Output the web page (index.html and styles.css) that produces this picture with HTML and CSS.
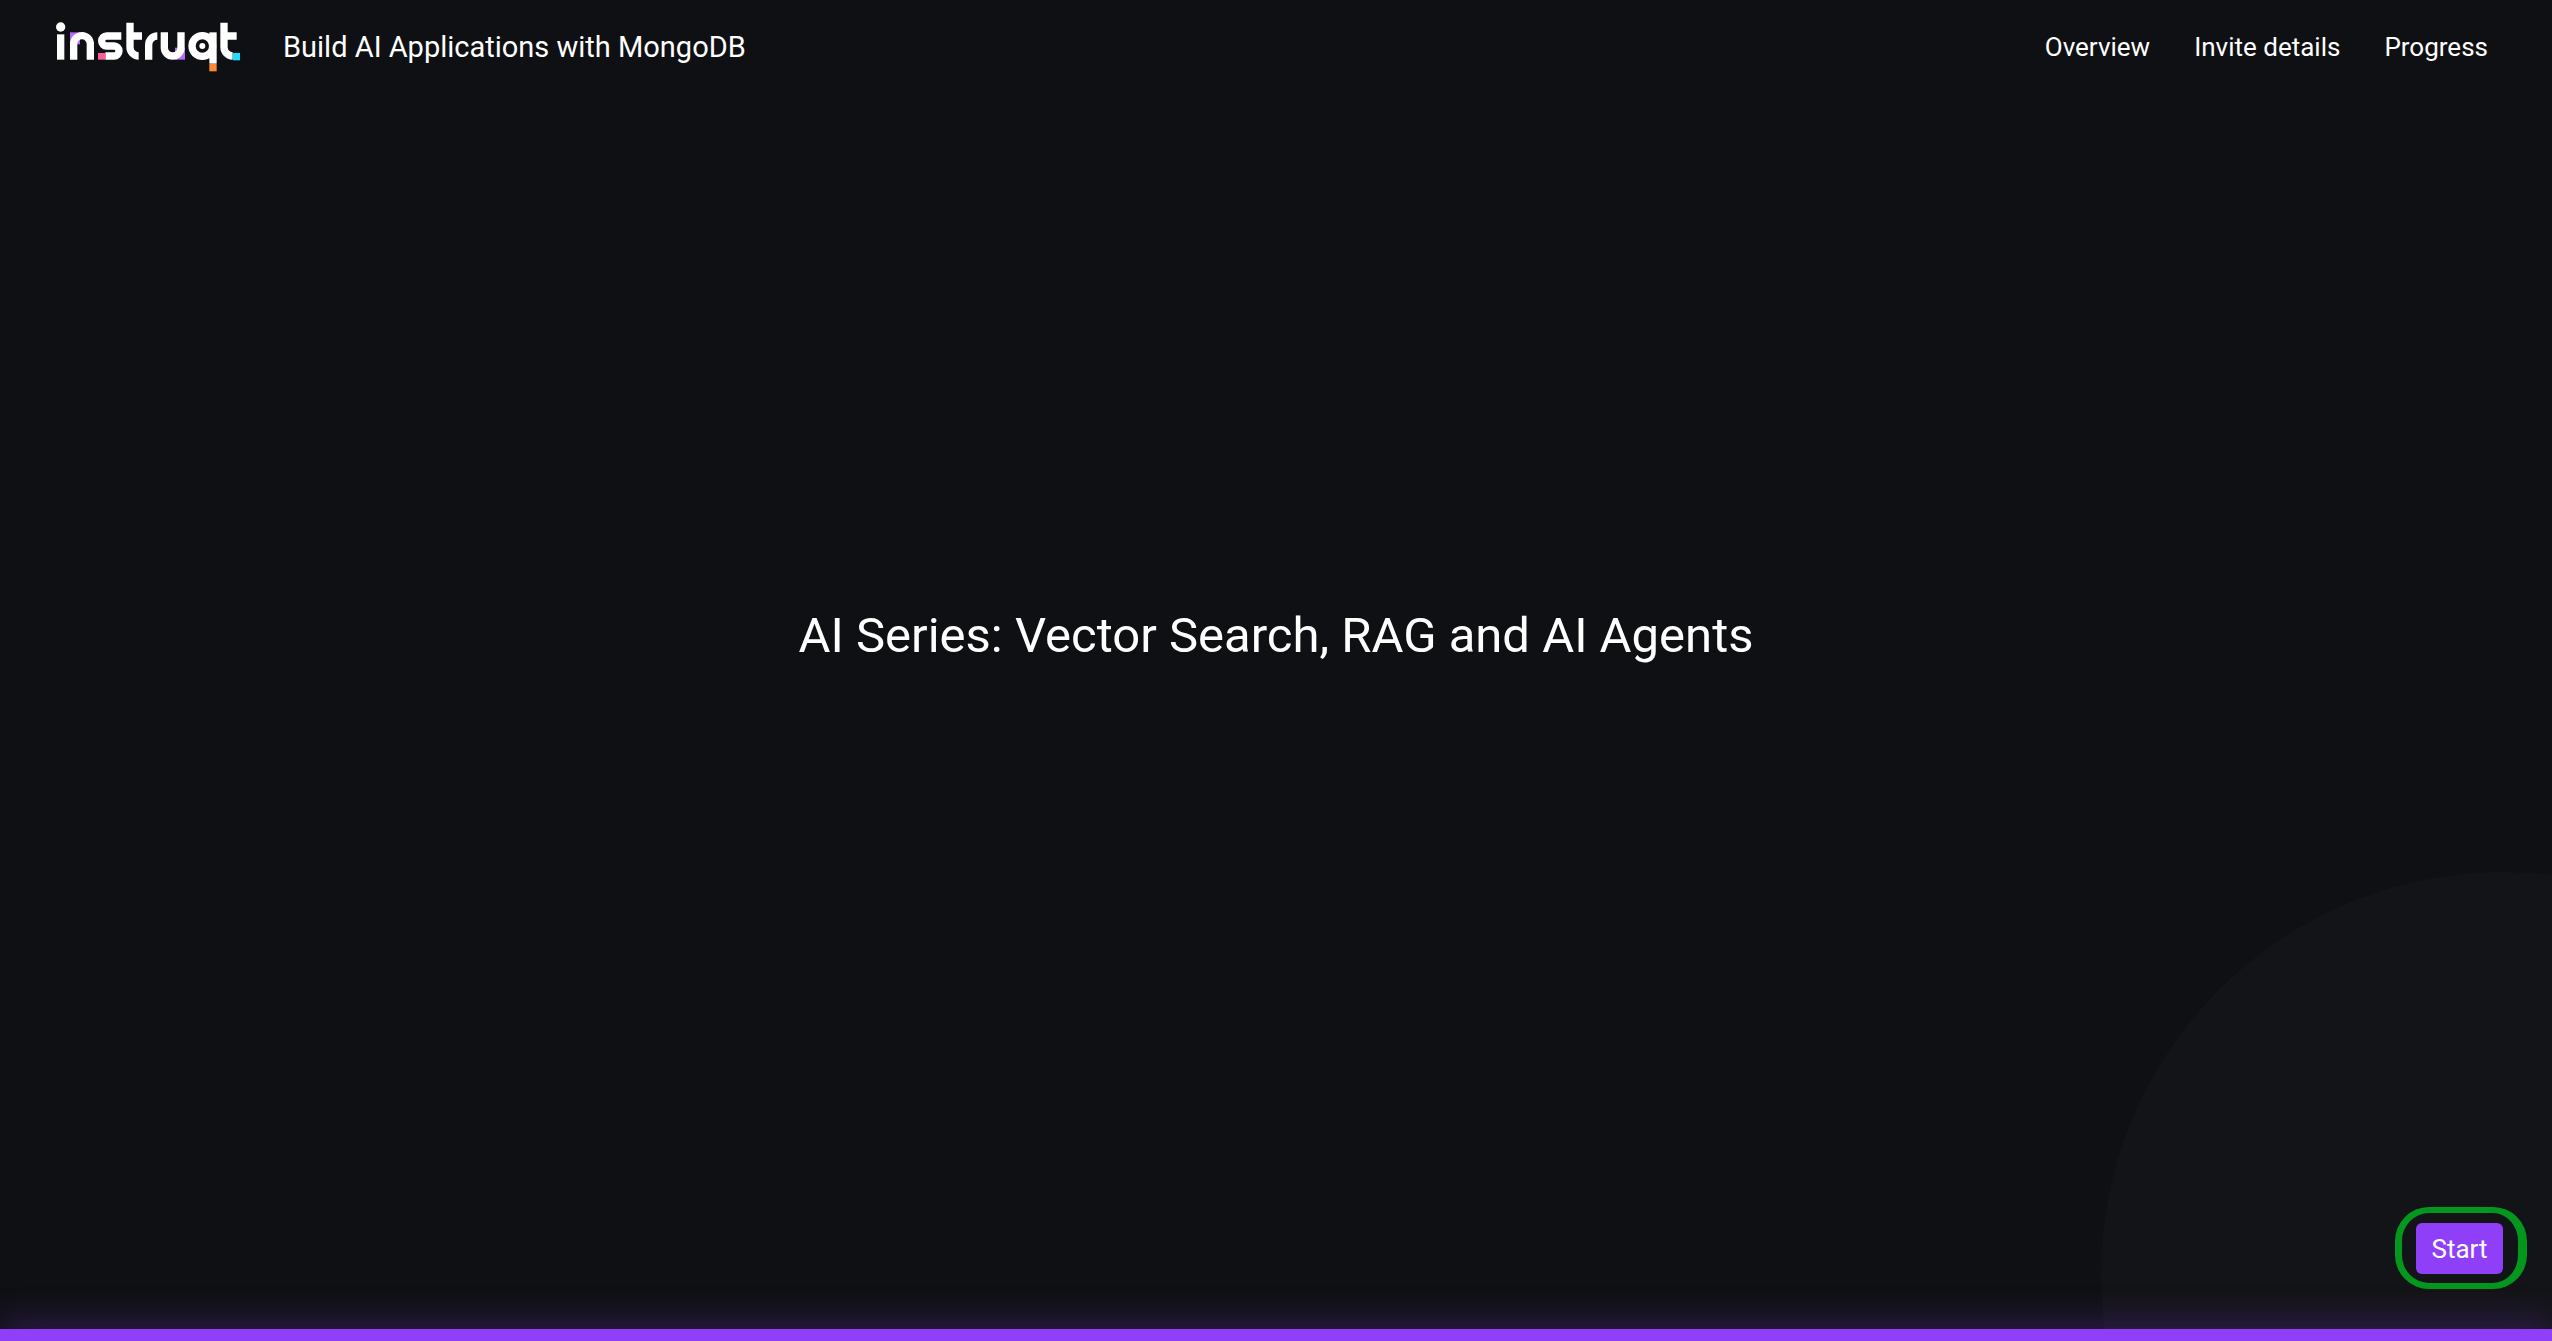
FILE: index.html
```html
<!DOCTYPE html>
<html lang="en">
<head>
  <meta charset="utf-8">
  <meta name="viewport" content="width=device-width, initial-scale=1">
  <title>Build AI Applications with MongoDB</title>
  <link rel="stylesheet" href="styles.css">
</head>
<body>
  <div class="page">
    <div class="backdrop-circle"></div>
    <header class="header">
      <a class="logo" href="#" aria-label="instruqt">
        <svg class="logo-mark" viewBox="48 38 552 150" aria-hidden="true">
          <rect x="90" y="69" width="30" height="36" fill="#b56bff"/>
          <rect x="405" y="115" width="30" height="36" fill="#b56bff"/>
          <g fill="none" stroke="#fff" stroke-width="22">
            <path d="M62 75V151"/>
            <path d="M101 151V104a25 25 0 0 1 50 0V151"/>
            <path d="M244 80H200a15 15 0 0 0 0 30H222a15 15 0 0 1 0 30H196"/>
            <path d="M270 40V114a26 26 0 0 0 26 26M270 80H306"/>
            <path d="M326 151V106a26 26 0 0 1 26 -26"/>
            <path d="M373 69V115a25 25 0 0 0 50 0V69"/>
            <circle cx="487" cy="110" r="31"/>
            <path d="M519 69V163"/>
            <path d="M552 40V114a26 26 0 0 0 26 26M552 80H590"/>
          </g>
          <circle cx="62" cy="53" r="14" fill="#fff"/>
          <circle cx="487" cy="110" r="9" fill="#fff"/>
          <rect x="174" y="131" width="22" height="20" fill="#ff5a9e"/>
          <rect x="508" y="164" width="22" height="22" fill="#ff8a36"/>
          <rect x="579" y="131" width="21" height="22" fill="#1cdcff"/>
        </svg>
      </a>
      <span class="header-title">Build AI Applications with MongoDB</span>
      <nav class="nav">
        <a class="nav-link" href="#">Overview</a>
        <a class="nav-link" href="#">Invite details</a>
        <a class="nav-link" href="#">Progress</a>
      </nav>
    </header>
    <main class="main">
      <h1 class="title">AI Series: Vector Search, RAG and AI Agents</h1>
    </main>
    <footer class="footer">
      <div class="highlight">
        <button class="start-button" type="button">Start</button>
      </div>
    </footer>
    <div class="progress-bar"></div>
  </div>
</body>
</html>
```

FILE: styles.css
```css
* {
  box-sizing: border-box;
}

body {
  margin: 0;
  background: #0f1013;
  color: #fff;
  font-family: Roboto, "Liberation Sans", sans-serif;
}

.page {
  position: relative;
  display: flex;
  flex-direction: column;
  min-height: 100vh;
  overflow: hidden;
  isolation: isolate;
}

.backdrop-circle {
  position: absolute;
  z-index: -1;
  right: -353px;
  bottom: -335px;
  width: 804px;
  height: 804px;
  border-radius: 50%;
  background: #131417;
}

.header {
  display: flex;
  align-items: center;
  padding: 22px 64px 22px 56px;
}

.logo {
  display: flex;
}

.logo-mark {
  width: 184px;
  height: 50px;
}

.header-title {
  margin-left: 43px;
  font-size: 29px;
  line-height: 36px;
}

.nav {
  display: flex;
  gap: 44px;
  margin-left: auto;
}

.nav-link {
  color: inherit;
  font-size: 26px;
  line-height: 32px;
  text-decoration: none;
}

.main {
  display: flex;
  flex: 1;
  align-items: center;
  justify-content: center;
  padding: 0 32px;
}

.title {
  margin: 0;
  font-size: 49px;
  font-weight: 400;
  line-height: 60px;
  text-align: center;
}

.footer {
  display: flex;
  justify-content: flex-end;
  padding: 29px 25px 40px;
}

.highlight {
  padding: 10px 15px 9px 14px;
  border: solid #04971f;
  border-width: 6px 9px 6px 7px;
  border-radius: 34px;
}

.start-button {
  display: block;
  width: 87px;
  height: 51px;
  padding: 0;
  border: 0;
  border-radius: 6px;
  background: #903ff9;
  color: #fff;
  font: inherit;
  font-size: 26px;
  line-height: 32px;
}

.progress-bar {
  height: 12px;
  background: #903ff9;
  box-shadow: 0 0 36px rgba(144, 63, 249, 0.6);
}
```
